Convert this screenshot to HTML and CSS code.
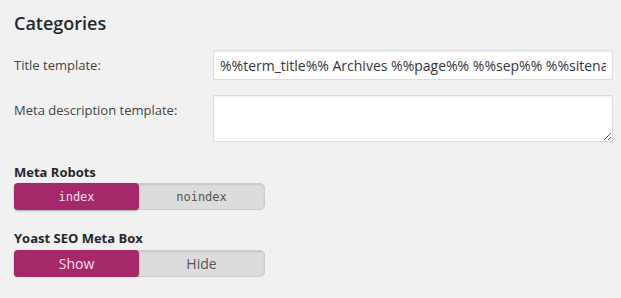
FILE: index.html
```html
<!DOCTYPE html>
<html lang="en">
<head>
    <meta charset="UTF-8">
    <title>Categories</title>
    <link rel="stylesheet" href="styles.css">
</head>
<body>
    <h2>Categories</h2>
    <div class="field">
        <label for="title_template">Title template:</label>
        <input type="text" id="title_template" value="%%term_title%% Archives %%page%% %%sep%% %%sitename%%">
    </div>
    <div class="field">
        <label for="metadesc">Meta description template:</label>
        <textarea id="metadesc"></textarea>
    </div>

    <div class="switch-group">
        <h4>Meta Robots</h4>
        <div class="switch mono">
            <span class="on">index</span>
            <span>noindex</span>
        </div>
    </div>
    <div class="switch-group">
        <h4>Yoast SEO Meta Box</h4>
        <div class="switch">
            <span class="on">Show</span>
            <span>Hide</span>
        </div>
    </div>
</body>
</html>
```

FILE: styles.css
```css
body {
    font-family: "Open Sans", "Noto Sans", sans-serif;
    background: #f1f1f1;
    color: #444;
    margin: 0;
    padding: 0 8px 0 14px;
    font-size: 13px;
}

h2 {
    font-size: 18px;
    font-weight: 600;
    color: #23282d;
    margin: 0;
    padding-top: 11px;
    height: 40px;
    box-sizing: border-box;
}

.field {
    display: flex;
    align-items: flex-start;
    margin-top: 10px;
}

.field label {
    width: 199px;
    padding-top: 6px;
}

.field input, .field textarea {
    width: 400px;
    box-sizing: border-box;
    border: 1px solid #ddd;
    box-shadow: inset 0 1px 2px rgba(0, 0, 0, 0.07);
    background: #fff;
    font-family: inherit;
    font-size: 14px;
    color: #32373c;
    margin: 0;
}

.field input {
    height: 30px;
    padding: 0 6px;
}

.field textarea {
    height: 47px;
    margin-top: 5px;
    resize: vertical;
}

.field:nth-of-type(2) label {
    padding-top: 11px;
}

.switch-group {
    margin-top: 21px;
}

.switch-group + .switch-group {
    margin-top: 19px;
}

.switch-group h4 {
    margin: 0 0 2px 0;
    font-size: 13px;
    line-height: 18px;
    font-weight: 700;
    color: #23282d;
}

.switch-group + .switch-group h4 {
    margin-bottom: 3px;
}

.switch {
    display: flex;
    width: 251px;
    height: 27px;
    background: #dcdcdc;
    border: 1px solid #ccc;
    border-radius: 5px;
    box-sizing: border-box;
    box-shadow: inset 0 1px 2px rgba(0, 0, 0, 0.1);
}

.switch span {
    flex: 1;
    display: flex;
    align-items: center;
    justify-content: center;
    color: #555;
    font-size: 14px;
}

.switch .on {
    background: #a4286a;
    color: #f5dfeb;
    border-radius: 4px;
    margin: -1px 0 -1px -1px;
    box-shadow: 0 1px 2px rgba(0, 0, 0, 0.3);
}

.mono span {
    font-family: "DejaVu Sans Mono", "Liberation Mono", monospace;
    font-size: 12px;
}
```
